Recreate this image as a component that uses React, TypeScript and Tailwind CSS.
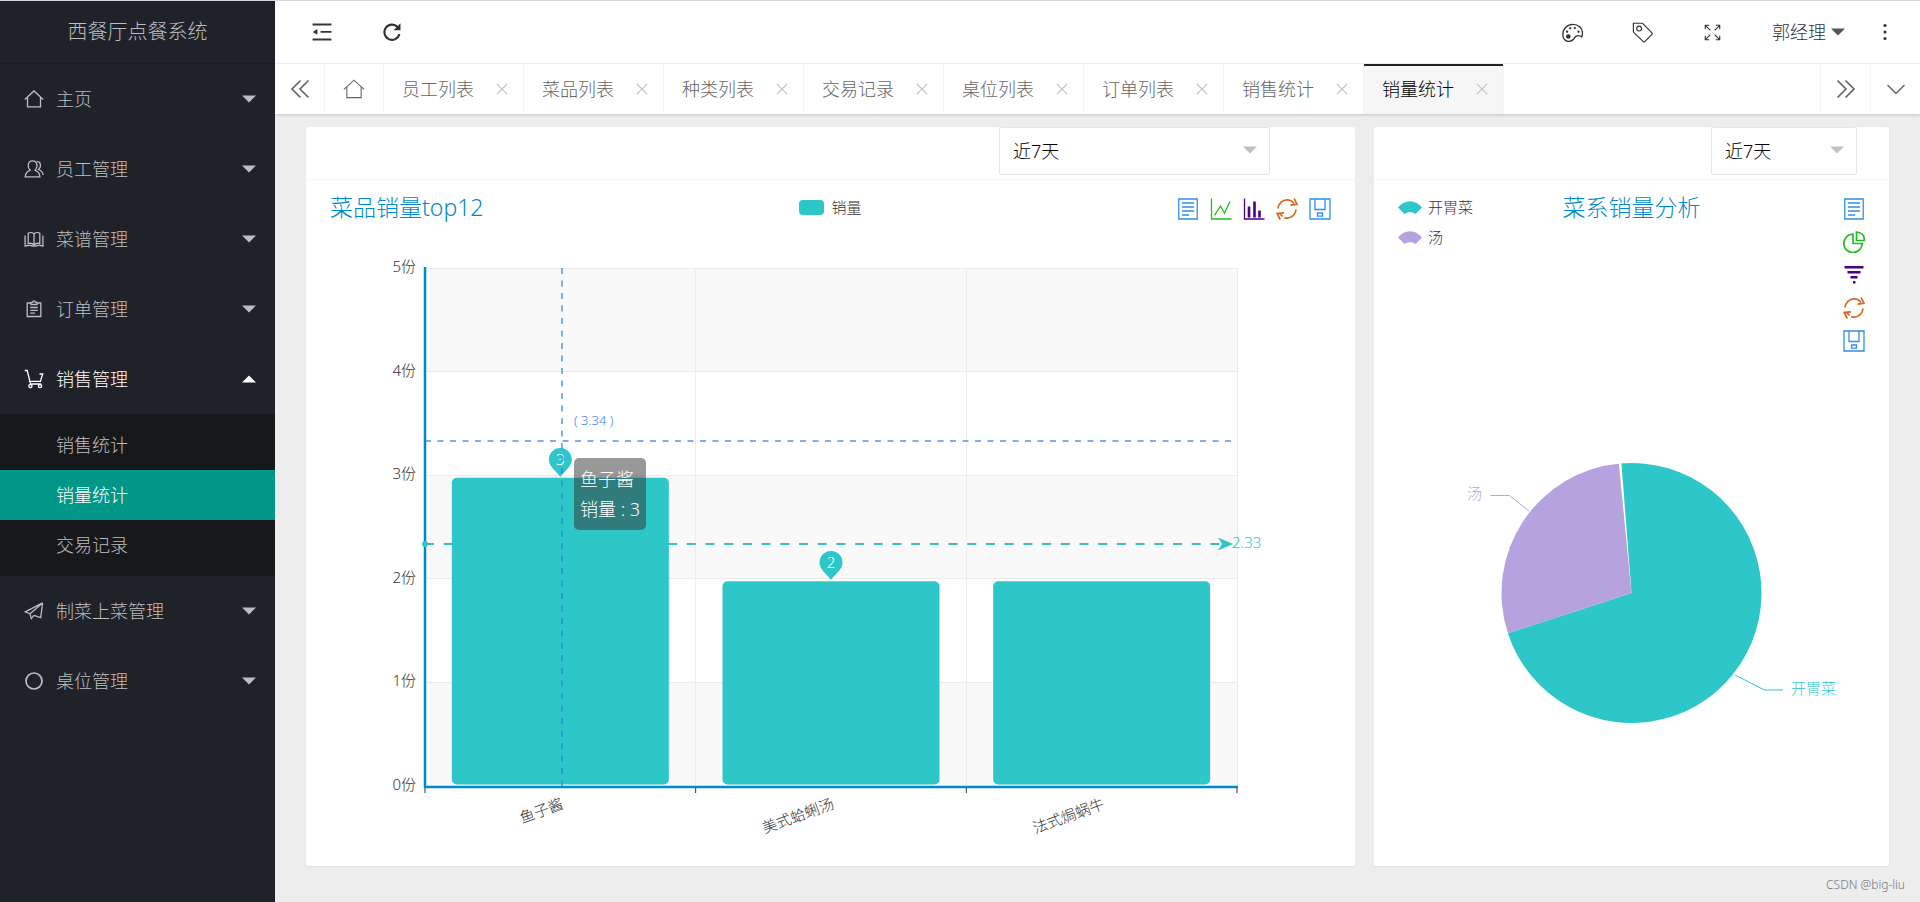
import { ReactNode, useState } from 'react';
import classNames from 'clsx';

const TEAL = '#2ec7c9';
const PURPLE = '#b6a2de';

function CaretIcon({ up = false, className = '' }: { up?: boolean; className?: string }) {
  return (
    <svg viewBox="0 0 14 8" className={classNames('h-[8px] w-[14px] shrink-0', className)} fill="currentColor">
      <path d={up ? 'M0 7.5 7 .5l7 7z' : 'M0 .5h14l-7 7z'} />
    </svg>
  );
}

function LineIcon({ children, className = 'size-[20px]' }: { children: ReactNode; className?: string }) {
  return (
    <svg viewBox="0 0 20 20" className={classNames('shrink-0', className)} fill="none" stroke="currentColor" strokeWidth="1.3">
      {children}
    </svg>
  );
}

/* sidebar icons */
const homeShape = <path d="M.8 10.4 10 2l9.2 8.4M3.5 8.2v9.6h13V8.2" />;

const menuIcons = {
  home: homeShape,
  user: (
    <path d="M6.2 11.2C4.6 9.8 4 8 4.2 6c.3-2.600 2-4.100 4.400-4.100S12.800 3.400 13 6c.2 2-.4 3.800-2 5.200 3 1.200 4.600 3.300 4.900 6.600H1.200c.3-3.300 2-5.400 5-6.600zM12.800 2.300c2.400.2 3.600 1.700 3.700 3.900 0 1.900-.5 3.200-1.900 4.300 2.600 1.100 4.100 2.600 4.500 5.500" />
  ),
  book: (
    <path d="M10 5v11M10 5C8.700 3.500 6 3.200 4.200 4.200v10.500c2-.8 4.300-.4 5.800 1.300 1.500-1.700 3.800-2.100 5.800-1.300V4.200C14 3.200 11.300 3.500 10 5zM1.100 6.500v10.600c2.800-.9 5.600-.9 7.400 0h3c1.800-.9 4.600-.9 7.400 0V6.500" />
  ),
  form: (
    <path d="M7 4H3.200v13.500h13.600V4H13M7 5.500h6V3.300h-1.600c-.2-1.800-2.600-1.800-2.800 0H7zM6.200 8.500h7.600M6.200 11.300h7.600M6.200 14.200h4.800" />
  ),
  cart: (
    <>
      <path d="M.8 1.500h2.400L6.600 15h10.600M4.800 12.300h11.600L18.700 5h-3.200" />
      <circle cx="6.400" cy="17.100" r="1.600" />
      <circle cx="16" cy="17.100" r="1.600" />
    </>
  ),
  plane: <path d="M18.600 1.900 1.200 10.800l4.800 2zM18.600 1.900 6 12.800l1.300 4.800 2.500-3.300M18.600 1.900l-1.900 14.700-6.900-2.300" />,
  circle: <circle cx="10" cy="10" r="8" strokeWidth="1.700" />,
};

type MenuItem = { title: string; icon: keyof typeof menuIcons; children?: string[] };

const menu: MenuItem[] = [
  { title: '主页', icon: 'home' },
  { title: '员工管理', icon: 'user' },
  { title: '菜谱管理', icon: 'book' },
  { title: '订单管理', icon: 'form' },
  { title: '销售管理', icon: 'cart', children: ['销售统计', '销量统计', '交易记录'] },
  { title: '制菜上菜管理', icon: 'plane' },
  { title: '桌位管理', icon: 'circle' },
];

const tabs = ['员工列表', '菜品列表', '种类列表', '交易记录', '桌位列表', '订单列表', '销售统计', '销量统计'];

function Sidebar() {
  const [open, setOpen] = useState('销售管理');

  return (
    <aside className="w-[275px] shrink-0 bg-[#20222a] text-[#bcbdbf]">
      <h1 className="flex h-[63px] items-center justify-center border-b border-[#1b1d23] text-[20px]">
        西餐厅点餐系统
      </h1>
      <nav>
        {menu.map((item) => {
          const opened = item.title === open;
          return (
            <div key={item.title}>
              <button
                type="button"
                className={classNames('flex h-[70px] w-full items-center gap-[12px] pr-[19px] pl-[24px]', {
                  'text-white': opened,
                })}
                onClick={() => setOpen(opened ? '' : item.title)}
              >
                <LineIcon>{menuIcons[item.icon]}</LineIcon>
                <span className="flex-1 text-left">{item.title}</span>
                <CaretIcon up={opened} />
              </button>
              {opened && item.children && (
                <div className="bg-[#17181c] py-[6px]">
                  {item.children.map((child) => (
                    <a
                      key={child}
                      href="#"
                      className={classNames('flex h-[50px] items-center pl-[56px]', {
                        'bg-[#009688] text-white': child === '销量统计',
                      })}
                    >
                      {child}
                    </a>
                  ))}
                </div>
              )}
            </div>
          );
        })}
      </nav>
    </aside>
  );
}

function HeaderButton({ label, children }: { label: string; children: ReactNode }) {
  return (
    <button type="button" aria-label={label} className="flex w-[70px] items-center justify-center">
      {children}
    </button>
  );
}

function Header() {
  return (
    <header className="flex h-[63px] justify-between border-b border-[#f4f4f4] bg-white pr-[10px] pl-[12px] text-[#333]">
      <div className="flex">
        <HeaderButton label="侧边伸缩">
          <LineIcon>
            <path d="M.6 2.500h18.800M.6 17.500h18.800M8.600 9.900h10.800" strokeWidth="1.900" />
            <path d="M.8 9.900 5.400 7v5.800z" fill="currentColor" stroke="none" />
          </LineIcon>
        </HeaderButton>
        <HeaderButton label="刷新">
          <LineIcon>
            <path d="M15.700 5.200A7.600 7.600 0 1 0 17.400 12" strokeWidth="2.100" />
            <path d="M18.500 1.200v7h-7z" fill="currentColor" stroke="none" />
          </LineIcon>
        </HeaderButton>
      </div>
      <div className="flex">
        <HeaderButton label="主题">
          <LineIcon className="size-[21px]">
            <path d="M10.300 2.300c5.100 0 9.200 3.500 9.200 8 0 1.800-.1 3-.8 3.900-1.100-1.200-2.700-1.500-4.500-1-2.300.6-2.300 2.500-3.900 3.800-1.500 1.200-3.300 1.700-5.200 1.300C2.400 17.600.8 15.400.8 11.900c0-5.600 4.200-9.600 9.500-9.600z" />
            <g fill="currentColor" stroke="none">
              <circle cx="6" cy="13.800" r="2.200" />
              <circle cx="4.800" cy="9.300" r="1.100" />
              <circle cx="7.800" cy="6" r="1.100" />
              <circle cx="12.200" cy="5.800" r="1.100" />
              <circle cx="15.700" cy="9.300" r="1.100" />
            </g>
          </LineIcon>
        </HeaderButton>
        <HeaderButton label="便签">
          <LineIcon className="size-[21px]">
            <path d="M1.300 1.200h8.200c.5 0 .8.2 1.100.5l8.400 8.700c.4.4.4 1 0 1.400l-6.900 6.900c-.4.400-1 .4-1.400 0L1.900 10.100c-.4-.3-.6-.7-.6-1.200z" strokeWidth="1.100" />
            <circle cx="6.800" cy="6.300" r="2.300" strokeWidth="1.100" />
          </LineIcon>
        </HeaderButton>
        <HeaderButton label="全屏">
          <LineIcon className="size-[17px]">
            <path d="M1.500 6.200V1.500h4.700M1.500 1.500 7.500 7.500M13.800 1.500h4.700v4.700M18.500 1.500l-6 6M1.500 13.800v4.700h4.700M1.500 18.500l6-6M18.500 13.800v4.700h-4.700M18.500 18.500l-6-6" />
          </LineIcon>
        </HeaderButton>
        <button type="button" className="flex items-center gap-[5px] pr-[15px] pl-[25px]">
          郭经理
          <CaretIcon className="text-[#555]" />
        </button>
        <button type="button" aria-label="更多" className="flex w-[50px] items-center justify-center">
          <svg viewBox="0 0 4 18" className="h-[18px] w-[4px]" fill="currentColor">
            <circle cx="2" cy="2.500" r="1.600" />
            <circle cx="2" cy="9" r="1.600" />
            <circle cx="2" cy="15.500" r="1.600" />
          </svg>
        </button>
      </div>
    </header>
  );
}

function TabBar() {
  const [active, setActive] = useState('销量统计');

  return (
    <div className="relative flex h-[50px] bg-white text-[#666] shadow-[0_1px_3px_rgba(0,0,0,0.18)]">
      <button type="button" aria-label="向左" className="flex w-[50px] items-center justify-center border-r border-[#f4f4f4]">
        <LineIcon>
          <path d="M10.500 1.500 2 10l8.500 8.500M18.500 1.500 10 10l8.500 8.500" strokeWidth="1.700" />
        </LineIcon>
      </button>
      <a href="#" aria-label="主页" className="flex w-[59px] items-center justify-center border-r border-[#f4f4f4]">
        <LineIcon className="size-[22px]">
          <g strokeWidth="1">{homeShape}</g>
        </LineIcon>
      </a>
      {tabs.map((tab) => (
        <div
          key={tab}
          className={classNames('flex w-[140px] items-center justify-between border-r border-[#f4f4f4] pr-[13px] pl-[18px]', {
            'bg-[#f6f6f6] text-black shadow-[inset_0_2px_0_#20222a]': tab === active,
          })}
        >
          <a href="#" onClick={() => setActive(tab)}>
            {tab}
          </a>
          <button type="button" aria-label="关闭" className="flex size-[16px] items-center justify-center text-[#c2c2c2]">
            <LineIcon className="size-[12px]">
              <path d="m1.500 1.500 17 17M18.500 1.500l-17 17" strokeWidth="2" />
            </LineIcon>
          </button>
        </div>
      ))}
      <div className="ml-auto flex">
        <button type="button" aria-label="向右" className="flex w-[50px] items-center justify-center border-l border-[#f4f4f4]">
          <LineIcon>
            <path d="M1.500 1.500 10 10l-8.500 8.500M9.500 1.500 18 10l-8.500 8.500" strokeWidth="1.700" />
          </LineIcon>
        </button>
        <button type="button" aria-label="页面操作" className="flex w-[50px] items-center justify-center border-l border-[#f4f4f4]">
          <LineIcon>
            <path d="m1.500 6 8.500 8.500L18.500 6" strokeWidth="1.500" />
          </LineIcon>
        </button>
      </div>
    </div>
  );
}

/* chart toolbox */
const toolIcons = {
  data: { label: '数据视图', color: '#2f8fe8', shape: <path d="M1.800 1h18.400v20H1.800zM5 5h12M5 9h12M5 13h12M5 17h7" /> },
  line: { label: '折线图', color: '#22bb22', shape: <path d="M1.500.5v20.500h20M4.500 17.500l6-9.500 4 7 5.500-11.500" /> },
  bar: {
    label: '柱形图',
    color: '#4b0082',
    shape: (
      <>
        <path d="M1.500.5v20.500h20" />
        <path d="M6 19.500V8.500M11.500 19.500V3.500M16.500 19.500V12.500" strokeWidth="2.600" />
      </>
    ),
  },
  pie: {
    label: '饼图',
    color: '#22bb22',
    shape: <path d="M10 3.200a9.200 9.200 0 1 0 9.200 9.300H10zM13.500 1v8.500h8C21.500 4.500 18.500 1.500 13.500 1z" strokeWidth="1.700" />,
  },
  funnel: {
    label: '漏斗图',
    color: '#4b0082',
    shape: <path d="M1.500 3.200h19M4.500 8.200h13M7.500 13.200h7M10 18.200h2.500" strokeWidth="2.600" />,
  },
  restore: {
    label: '还原',
    color: '#d2691e',
    shape: (
      <path d="M2 10.500C2.300 5.500 6.500 1.800 11 1.800c3 0 5.500 1.400 7 3.700M18.200.5l2.800 5.800-6.500.8M20 11.500c-.3 5-4.500 8.700-9 8.700-1 0-2-.2-2.800-.5M6.500 18.500 3 14.800M4.200 21.500 1.200 15.500l6.800-.6" strokeWidth="1.700" />
    ),
  },
  save: {
    label: '保存为图片',
    color: '#2f8fe8',
    shape: <path d="M1 1h20v20H1zM6 1v10.500h10V1M8.500 15h5v3.200h-5z" />,
  },
};

function Toolbox({ tools, vertical = false }: { tools: (keyof typeof toolIcons)[]; vertical?: boolean }) {
  return (
    <div className={classNames('flex justify-self-end gap-[11px] pt-[6px]', { 'flex-col': vertical })}>
      {tools.map((name) => {
        const { label, color, shape } = toolIcons[name];
        return (
          <button key={name} type="button" aria-label={label}>
            <svg viewBox="0 0 22 22" className="size-[22px]" fill="none" stroke={color} strokeWidth="1.300">
              {shape}
            </svg>
          </button>
        );
      })}
    </div>
  );
}

function RangeSelect({ className }: { className: string }) {
  return (
    <div className={classNames('relative', className)}>
      <select
        aria-label="时间范围"
        className="h-[48px] w-full appearance-none rounded-[2px] border border-[#e6e6e6] bg-white px-[13px] text-black"
      >
        <option>近7天</option>
        <option>近30天</option>
      </select>
      <CaretIcon className="pointer-events-none absolute top-[19px] right-[13px] text-[#c2c2c2]" />
    </div>
  );
}

/* bar chart: plot area and scales */
const plot = { left: 119, right: 931, top: 28, bottom: 546 };
const stepY = (plot.bottom - plot.top) / 5;
const stepX = (plot.right - plot.left) / 3;

const sales = [
  { name: '鱼子酱', value: 3 },
  { name: '美式蛤蜊汤', value: 2 },
  { name: '法式焗蜗牛', value: 2 },
];

const yOf = (value: number) => plot.bottom - value * stepY;
const xOf = (index: number) => plot.left + stepX * (index + 0.5);

function Pin({ x, y, value }: { x: number; y: number; value: number }) {
  return (
    <g>
      <path
        d={`M${x} ${y}c-3-5-11.500-10-11.500-17.500a11.500 11.500 0 0 1 23 0C${x + 11.5} ${y - 10} ${x + 3} ${y - 5} ${x} ${y}z`}
        fill={TEAL}
      />
      <text x={x} y={y - 12} textAnchor="middle" fontSize="15" fill="#fff">
        {value}
      </text>
    </g>
  );
}

function BarChart() {
  return (
    <svg viewBox="0 0 1049 626" className="block w-full">
      {[0, 2, 4].map((row) => (
        <rect key={row} x={plot.left} y={yOf(row + 1)} width={plot.right - plot.left} height={stepY} fill="#f9f9f9" />
      ))}
      <g stroke="#ececec" shapeRendering="crispEdges">
        {[1, 2, 3, 4, 5].map((v) => (
          <line key={v} x1={plot.left} x2={plot.right} y1={yOf(v)} y2={yOf(v)} />
        ))}
        {[1, 2, 3].map((n) => (
          <line key={n} x1={plot.left + stepX * n} x2={plot.left + stepX * n} y1={plot.top} y2={plot.bottom} />
        ))}
      </g>
      <g fontSize="15" fill="#333" textAnchor="end">
        {[0, 1, 2, 3, 4, 5].map((v) => (
          <text key={v} x={plot.left - 9} y={yOf(v) + 4}>
            {v}份
          </text>
        ))}
        {sales.map((item, i) => (
          <text key={item.name} transform={`translate(${xOf(i) + 4} 568) rotate(-20)`}>
            {item.name}
          </text>
        ))}
      </g>

      {/* average line */}
      <line x1={plot.left} x2={plot.right - 16} y1="304" y2="304" stroke="#3dbdbb" strokeWidth="2" strokeDasharray="9 9.700" />
      <path d="M927 304l-15-6.500 4 6.500-4 6.500z" fill={TEAL} />
      <text x="926" y="308" fontSize="15" fill={TEAL}>
        2.33
      </text>

      <g stroke="#333">
        {[0, 1, 2, 3].map((n) => (
          <line key={n} x1={plot.left + stepX * n} x2={plot.left + stepX * n} y1={plot.bottom} y2={plot.bottom + 7} />
        ))}
      </g>
      <path d={`M${plot.left} ${plot.top - 1}V${plot.bottom + 1}H${plot.right + 1}`} fill="none" stroke="#008acd" strokeWidth="2.500" />
      <circle cx={plot.left} cy="304" r="3" fill={TEAL} />

      {sales.map((item, i) => (
        <rect
          key={item.name}
          x={xOf(i) - 108.5}
          y={yOf(item.value) + 2.500}
          width="217"
          height={item.value * stepY - 4}
          rx="5"
          fill={TEAL}
        />
      ))}

      <Pin x={xOf(0)} y={237} value={3} />
      <Pin x={xOf(1)} y={340} value={2} />

      {/* crosshair and tooltip of the hovered bar */}
      <g stroke="#1e80e0" strokeOpacity="0.8" strokeWidth="1.500" strokeDasharray="6 6.500">
        <line x1="256" x2="256" y1={plot.top} y2={plot.bottom} />
        <line x1={plot.left} x2={plot.right} y1="201" y2="201" />
      </g>
      <text x="268" y="185" fontSize="13" fill="#3d85d8">
        ( 3.34 )
      </text>
      <rect x="268" y="218" width="72" height="72" rx="5" fill="#323232" fillOpacity="0.5" />
      <g fontSize="18" fill="#fff">
        <text x="274" y="246">
          鱼子酱
        </text>
        <text x="274" y="276">
          销量 : 3
        </text>
      </g>
    </svg>
  );
}

function PieChart() {
  return (
    <svg viewBox="0 0 515 506" className="block w-full" fontSize="15">
      <path d="M257.500 233 246.200 103.500A130 130 0 1 1 133.900 273.200z" fill={TEAL} />
      <path d="M257.500 233 133.900 273.200A130 130 0 0 1 246.200 103.500z" fill={PURPLE} />
      <path d="M257.500 233 244.800 103h2.600z" fill="#fff" />
      <path d="M155 151 135.500 135.500H116.500" fill="none" stroke={PURPLE} />
      <text x="93" y="139" fill={PURPLE}>
        汤
      </text>
      <path d="M361 315l29.500 15H409" fill="none" stroke={TEAL} />
      <text x="417" y="334" fill={TEAL}>
        开胃菜
      </text>
    </svg>
  );
}

function PieLegend({ color, name }: { color: string; name: string }) {
  return (
    <li className="flex h-[30px] items-center gap-[6px]">
      <svg viewBox="0 0 24 13" className="h-[13px] w-[24px]" fill={color}>
        <path d="M0 6.500C7-1.800 17-1.800 24 6.500L17.500 13c-3-2.300-8-2.300-11 0z" />
      </svg>
      {name}
    </li>
  );
}

function Card({ header, className, children }: { header: ReactNode; className?: string; children: ReactNode }) {
  return (
    <section className={classNames('rounded-[2px] bg-white shadow-[0_1px_2px_rgba(0,0,0,0.06)]', className)}>
      <div className="flex h-[53px] justify-end border-b border-[#f6f6f6]">{header}</div>
      {children}
    </section>
  );
}

export default function App() {
  return (
    <div className="flex min-h-screen border-t border-[#d3d9d9] bg-[#ededed] font-['Noto_Sans','Noto_Sans_CJK_SC',sans-serif] text-[18px] leading-[24px] font-light">
      <Sidebar />
      <div className="flex min-w-0 flex-1 flex-col">
        <Header />
        <TabBar />
        <main className="grid grid-cols-3 gap-[19px] px-[31px] pt-[13px]">
          <Card className="col-span-2" header={<RangeSelect className="mr-[85px] w-[271px]" />}>
            <div className="grid grid-cols-[1fr_auto_1fr] items-start px-[24px] pt-[12px] pb-[18px]">
              <h2 className="text-[23px] leading-[30px] text-[#008acd]">菜品销量top12</h2>
              <div className="flex h-[30px] items-center gap-[7px] text-[15px] text-[#333]">
                <span className="h-[15px] w-[25px] rounded-[4px] bg-[#2ec7c9]" />
                销量
              </div>
              <Toolbox tools={['data', 'line', 'bar', 'restore', 'save']} />
            </div>
            <BarChart />
          </Card>
          <Card header={<RangeSelect className="mr-[32px] w-[146px]" />}>
            <div className="grid grid-cols-[1fr_auto_1fr] items-start px-[24px] pt-[12px] pb-[8px]">
              <ul className="text-[15px] text-[#333]">
                <PieLegend color={TEAL} name="开胃菜" />
                <PieLegend color={PURPLE} name="汤" />
              </ul>
              <h2 className="text-[23px] leading-[30px] text-[#008acd]">菜系销量分析</h2>
              <Toolbox vertical tools={['data', 'pie', 'funnel', 'restore', 'save']} />
            </div>
            <PieChart />
          </Card>
        </main>
        <footer className="mt-auto pr-[15px] pb-[5px] text-right text-[12px] text-[#777]">CSDN @big-liu</footer>
      </div>
    </div>
  );
}
